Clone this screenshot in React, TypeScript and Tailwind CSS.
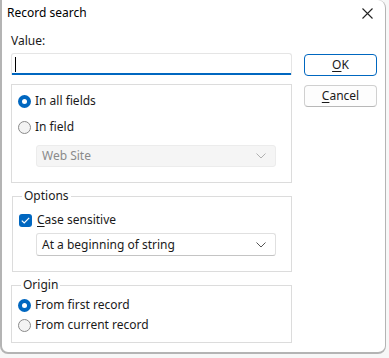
import React from "react";

const font = { fontFamily: '"Noto Sans", "Open Sans", sans-serif' };

function Radio({ checked, label }: { checked: boolean; label: string }) {
  return (
    <div className="flex h-[20px] items-center gap-[4px]">
      {checked ? (
        <span className="flex h-[13px] w-[13px] items-center justify-center rounded-full bg-[#0067c0]">
          <span className="h-[5px] w-[5px] rounded-full bg-white" />
        </span>
      ) : (
        <span className="h-[13px] w-[13px] rounded-full border border-[#8a8a8a] bg-[#f3f3f3]" />
      )}
      <span className="text-[12px] text-[#1a1a1a]">{label}</span>
    </div>
  );
}

function Chevron({ color }: { color: string }) {
  return (
    <svg width="10" height="6" viewBox="0 0 10 6" fill="none">
      <path d="M0.5 0.5 L5 5 L9.5 0.5" stroke={color} strokeWidth="1" />
    </svg>
  );
}

function Group({ caption, className, children }: { caption: string; className: string; children: React.ReactNode }) {
  return (
    <div className={`relative border border-[#dcdcdc] ${className}`}>
      <span className="absolute left-[9px] top-[-9px] bg-white px-[2px] text-[12px] leading-[16px] text-[#1a1a1a]">
        {caption}
      </span>
      {children}
    </div>
  );
}

export default function App() {
  return (
    <div className="h-[358px] w-[389px] bg-[#f7f7f7]" style={font}>
      <div className="h-[354px] w-[386px] rounded-tr-[8px] rounded-b-[8px] border-l-[2px] border-r border-b-[2px] border-[#b4b4b4] bg-white">
        {/* Title bar */}
        <div className="flex h-[26px] items-center justify-between pl-[5px] pr-[12px]">
          <span className="text-[12px] text-black">Record search</span>
          <svg width="11" height="11" viewBox="0 0 11 11">
            <path d="M0.5 0.5 L10.5 10.5 M10.5 0.5 L0.5 10.5" stroke="#222" strokeWidth="1.1" />
          </svg>
        </div>

        <div className="flex gap-[12px] pl-[9px]">
          {/* Left column */}
          <div className="flex w-[281px] flex-col">
            <span className="mt-[7px] text-[12px] leading-[16px] text-[#1a1a1a]">Value:</span>
            <div className="mt-[4px] flex h-[22px] items-center rounded-t-[3px] border border-b-0 border-[#e5e5e5] bg-white pl-[3px] shadow-[inset_0_-2px_0_#0067c0]">
              <span className="h-[15px] w-[1px] bg-black" />
            </div>

            <div className="mt-[9px] h-[99px] border border-[#dcdcdc] pl-[6px] pt-[6px]">
              <Radio checked label="In all fields" />
              <div className="mt-[6px]">
                <Radio checked={false} label="In field" />
              </div>
              <div className="ml-[18px] mt-[8px] flex h-[22px] w-[240px] items-center justify-between rounded-[3px] border border-[#ececec] bg-[#f5f5f5] pl-[5px] pr-[9px]">
                <span className="text-[12px] text-[#8a8a8a]">Web Site</span>
                <Chevron color="#b0b0b0" />
              </div>
            </div>

            <Group caption="Options" className="ml-[1px] mt-[13px] h-[76px] pl-[6px] pt-[13px]">
              <div className="flex h-[20px] items-center gap-[5px]">
                <span className="flex h-[13px] w-[13px] items-center justify-center rounded-[3px] bg-[#0067c0]">
                  <svg width="9" height="7" viewBox="0 0 9 7" fill="none">
                    <path d="M0.8 3.6 L3.2 6 L8.2 0.9" stroke="white" strokeWidth="1.2" />
                  </svg>
                </span>
                <span className="text-[12px] text-[#1a1a1a]">
                  <span className="underline underline-offset-2">C</span>ase sensitive
                </span>
              </div>
              <div className="ml-[17px] mt-[3px] flex h-[23px] w-[240px] items-center justify-between rounded-[3px] border border-[#e0e0e0] border-b-[#c4c4c4] bg-white pl-[5px] pr-[9px]">
                <span className="text-[12px] text-[#1a1a1a]">At a beginning of string</span>
                <Chevron color="#555" />
              </div>
            </Group>

            <Group caption="Origin" className="mt-[13px] h-[58px] pl-[6px] pt-[9px]">
              <Radio checked label="From first record" />
              <Radio checked={false} label="From current record" />
            </Group>
          </div>

          {/* Buttons */}
          <div className="flex w-[73px] flex-col gap-[9px] pt-[28px]">
            <div className="flex h-[22px] items-center justify-center rounded-[4px] border border-[#0067c0] bg-white text-[12px] text-[#1a1a1a]">
              <span>
                <span className="underline underline-offset-2">O</span>K
              </span>
            </div>
            <div className="flex h-[22px] items-center justify-center rounded-[4px] border border-[#d0d0d0] border-b-[#b8b8b8] bg-[#fdfdfd] text-[12px] text-[#1a1a1a]">
              <span>
                <span className="underline underline-offset-2">C</span>ancel
              </span>
            </div>
          </div>
        </div>
      </div>
    </div>
  );
}
